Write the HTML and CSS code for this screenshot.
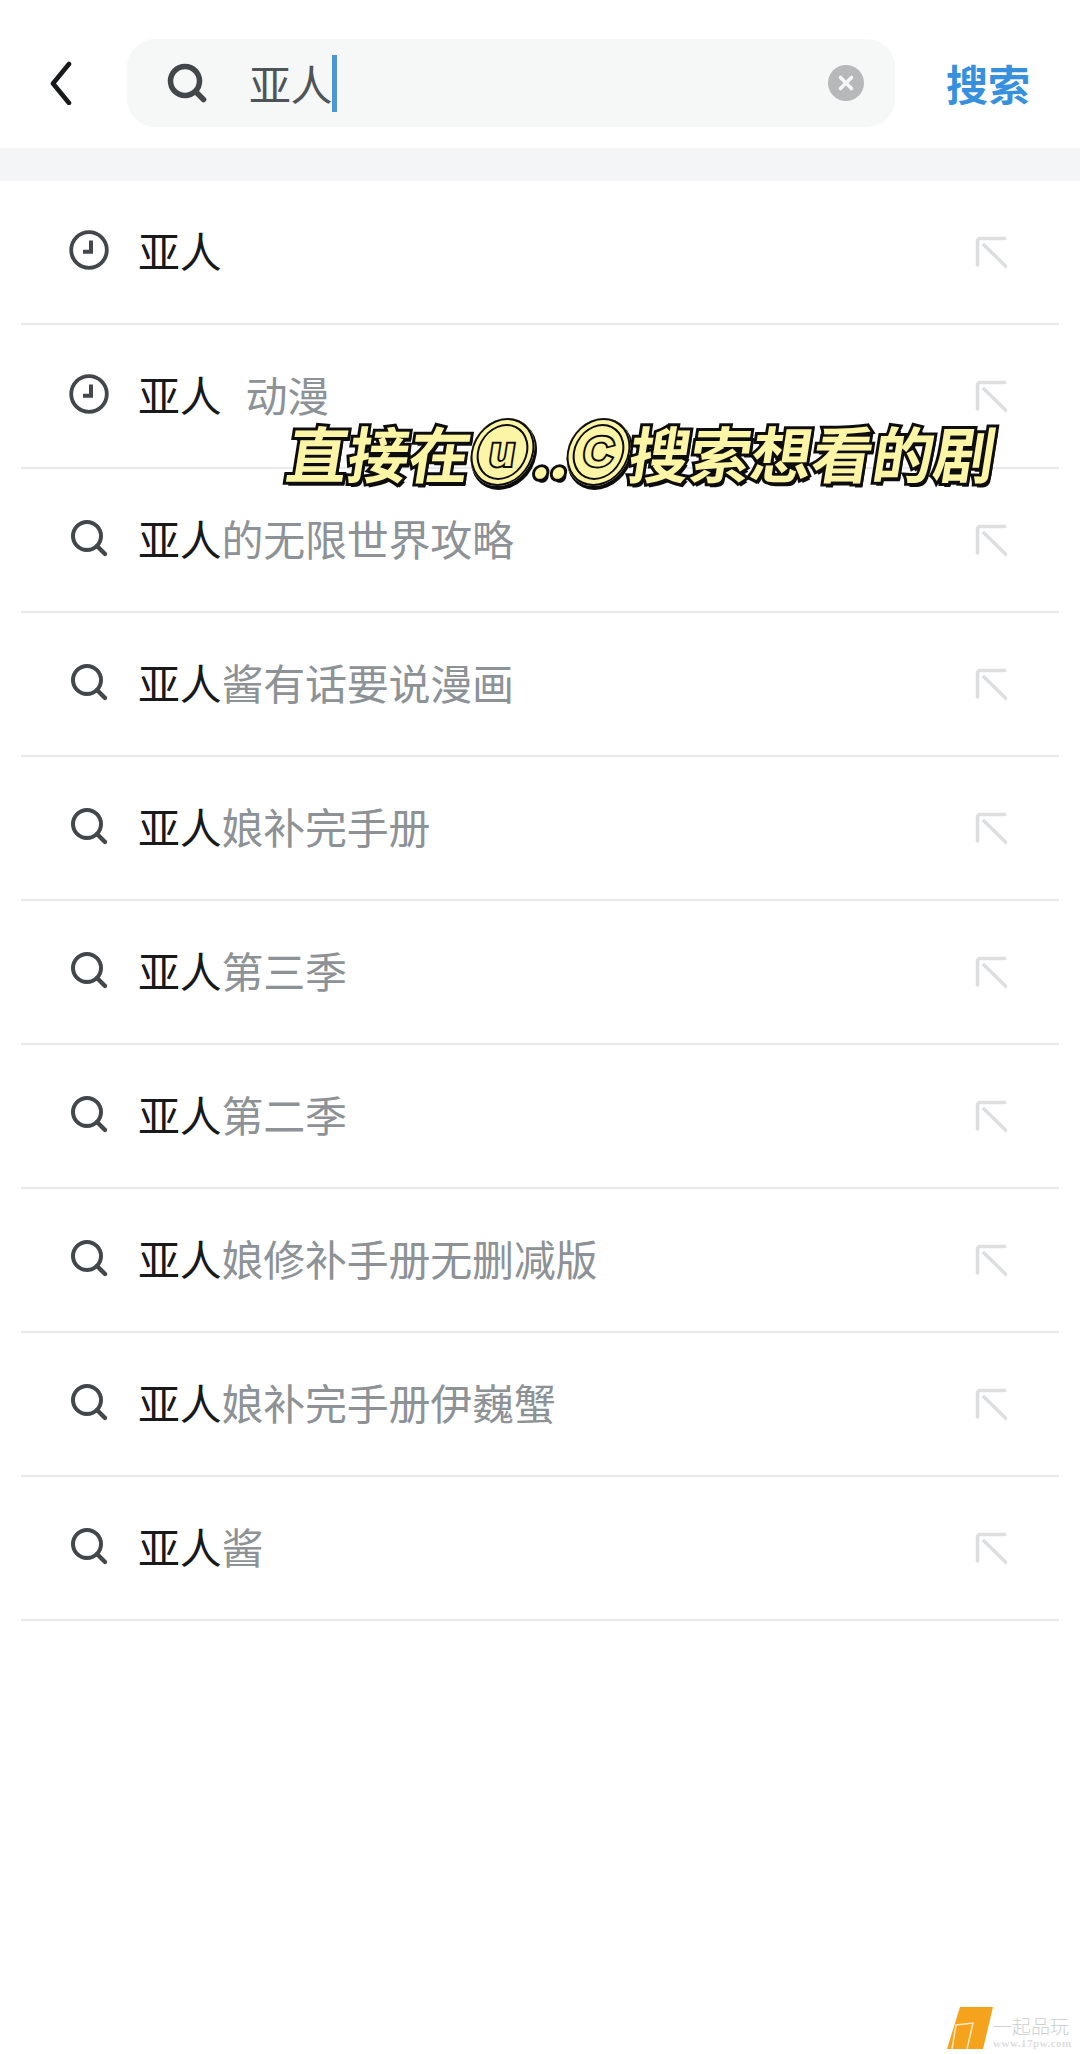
FILE: index.html
```html
<!DOCTYPE html>
<html lang="zh-CN">
<head>
<meta charset="utf-8">
<title>搜索</title>
<link rel="stylesheet" href="styles.css">
</head>
<body>
<svg class="defs" width="0" height="0" aria-hidden="true">
  <symbol id="i-search" viewBox="0 0 40 40"><circle cx="18" cy="18" r="14" fill="none" stroke="currentColor" stroke-width="4"/><path d="M28 28l8 8" fill="none" stroke="currentColor" stroke-width="4.400" stroke-linecap="round"/></symbol>
  <symbol id="i-search-bold" viewBox="0 0 40 40"><circle cx="18" cy="18" r="14.500" fill="none" stroke="currentColor" stroke-width="5.500"/><path d="M29 29l7.500 7.500" fill="none" stroke="currentColor" stroke-width="5.500" stroke-linecap="round"/></symbol>
  <symbol id="i-clock" viewBox="0 0 40 40"><circle cx="20" cy="20" r="17.800" fill="none" stroke="currentColor" stroke-width="3.800"/><path d="M22 10.500v11.200h-8" fill="none" stroke="currentColor" stroke-width="4"/></symbol>
  <symbol id="i-fill" viewBox="0 0 32 32"><path d="M29.500 2.500H5.500Q2.500 2.500 2.500 5.500V29M9 9L31 30.500" fill="none" stroke="currentColor" stroke-width="3.600" stroke-linecap="round"/></symbol>
</svg>
<div class="page">
  <header class="top">
    <svg class="back" viewBox="0 0 22 44"><path d="M19 3L3 22.500L19 42" fill="none" stroke="currentColor" stroke-width="4.600" stroke-linecap="round" stroke-linejoin="round"/></svg>
    <div class="box">
      <svg class="box-search"><use href="#i-search-bold"/></svg>
      <span class="query">亚人</span><i class="caret"></i>
      <svg class="clear" viewBox="0 0 36 36"><circle cx="18" cy="18" r="18" fill="#b7b8b9"/><path d="M12.500 12.500l11 11M23.500 12.500l-11 11" stroke="#f6f6f6" stroke-width="3.600" stroke-linecap="round"/></svg>
    </div>
    <span class="go">搜索</span>
  </header>
  <div class="band"></div>
  <ul class="list">
    <li class="row"><svg class="lead clock"><use href="#i-clock"/></svg><span class="hit">亚人</span><svg class="fill"><use href="#i-fill"/></svg></li>
    <li class="row"><svg class="lead clock"><use href="#i-clock"/></svg><span class="hit">亚人</span><span class="tag">动漫</span><svg class="fill"><use href="#i-fill"/></svg></li>
    <li class="row"><svg class="lead"><use href="#i-search"/></svg><span class="hit">亚人</span><span class="rest">的无限世界攻略</span><svg class="fill"><use href="#i-fill"/></svg></li>
    <li class="row"><svg class="lead"><use href="#i-search"/></svg><span class="hit">亚人</span><span class="rest">酱有话要说漫画</span><svg class="fill"><use href="#i-fill"/></svg></li>
    <li class="row"><svg class="lead"><use href="#i-search"/></svg><span class="hit">亚人</span><span class="rest">娘补完手册</span><svg class="fill"><use href="#i-fill"/></svg></li>
    <li class="row"><svg class="lead"><use href="#i-search"/></svg><span class="hit">亚人</span><span class="rest">第三季</span><svg class="fill"><use href="#i-fill"/></svg></li>
    <li class="row"><svg class="lead"><use href="#i-search"/></svg><span class="hit">亚人</span><span class="rest">第二季</span><svg class="fill"><use href="#i-fill"/></svg></li>
    <li class="row"><svg class="lead"><use href="#i-search"/></svg><span class="hit">亚人</span><span class="rest">娘修补手册无删减版</span><svg class="fill"><use href="#i-fill"/></svg></li>
    <li class="row"><svg class="lead"><use href="#i-search"/></svg><span class="hit">亚人</span><span class="rest">娘补完手册伊巍蟹</span><svg class="fill"><use href="#i-fill"/></svg></li>
    <li class="row"><svg class="lead"><use href="#i-search"/></svg><span class="hit">亚人</span><span class="rest">酱</span><svg class="fill"><use href="#i-fill"/></svg></li>
  </ul>
  <div class="caption">
    <span class="cap-text">直接在</span>
    <span class="ring"><span class="ring-letter">u</span></span>
    <span class="cap-text cap-dots">..</span>
    <span class="ring"><span class="ring-letter">C</span></span>
    <span class="cap-text">搜索想看的剧</span>
  </div>
  <div class="mark">
    <svg class="mark-logo" viewBox="0 0 46 42"><path d="M13 0H46L36 42H0Z" fill="#f5a31c"/><path d="M5 42L9 18L26 16L20 42" fill="none" stroke="#ffe9c4" stroke-width="1.500"/></svg>
    <div class="mark-text"><span class="mark-cn">一起品玩</span><span class="mark-url">www.17pw.com</span></div>
  </div>
</div>
</body>
</html>
```
FILE: styles.css
```css
* { box-sizing: border-box; }
html, body { margin: 0; padding: 0; background: #fff; }
body { font-family: "Noto Sans CJK SC", "Noto Sans", sans-serif; }
.defs { position: absolute; }
.page { position: relative; width: 1080px; height: 2054px; overflow: hidden; background: #fff; }
.top { height: 148px; display: flex; align-items: center; padding: 18px 50px 0 50px; }
.back { width: 22px; height: 44px; color: #17191b; margin-right: 55px; flex: none; }
.box { width: 770px; height: 88px; border-radius: 28px; background: #f6f7f7; display: flex; align-items: center; padding: 0 31px 0 40px; }
.box-search { width: 40px; height: 40px; color: #42474c; flex: none; margin-right: 42px; }
.query { font-size: 42px; line-height: 56px; letter-spacing: -0.4px; color: #4f5458; }
.caret { display: block; width: 5px; height: 57px; background: #4c97d1; }
.clear { width: 36px; height: 36px; margin-left: auto; }
.go { font-size: 42px; line-height: 56px; font-weight: 700; color: #3690dd; margin-left: 51px; white-space: nowrap; }
.band { height: 33px; background: #f4f5f6; }
.list { list-style: none; margin: 0; padding: 0; }
.row { height: 144px; margin: 0 21px; padding: 0 52px 0 48px; border-bottom: 2px solid #e8e9ea; display: flex; align-items: center; font-size: 42px; line-height: 56px; letter-spacing: -0.25px; white-space: nowrap; }
.lead { width: 40px; height: 40px; color: #42474c; flex: none; margin-right: 29px; position: relative; top: -2px; }
.hit { color: #17191b; position: relative; top: -2px; }
.rest { color: #8c9296; position: relative; top: -2px; }
.tag { color: #8c9296; margin-left: 24px; position: relative; top: -2px; }
.fill { width: 32px; height: 32px; color: #dcdedf; margin-left: auto; flex: none; }
.caption { position: absolute; left: 288px; top: 415px; height: 74px; display: flex; align-items: center; white-space: nowrap; transform: skewX(-9deg); }
.cap-text { font-size: 61px; line-height: 74px; font-weight: 700; color: #fdf5a6; -webkit-text-stroke: 6px #0d0d0d; paint-order: stroke fill; text-shadow: 3px 4px 0 #0d0d0d; }
.cap-dots { width: 33px; letter-spacing: -2px; }
.ring { flex: none; width: 63px; height: 68px; border-radius: 50%; background: #fdf5a6; box-shadow: 2px 3px 0 1px #0d0d0d, inset 0 0 0 2px #0d0d0d, inset 0 0 0 6px #fdf5a6, inset 0 0 0 8px #0d0d0d; display: flex; align-items: center; justify-content: center; }
.ring-letter { font-family: "Liberation Sans", sans-serif; font-size: 42px; line-height: 46px; font-weight: 700; color: #fdf5a6; -webkit-text-stroke: 4px #0d0d0d; paint-order: stroke fill; }
.mark { position: absolute; left: 947px; top: 2006px; display: flex; align-items: center; gap: 0; }
.mark-logo { width: 46px; height: 42px; flex: none; }
.mark-text { display: flex; flex-direction: column; margin-top: 8px; }
.mark-cn { font-size: 19px; line-height: 23px; color: #ced0d2; font-weight: 300; }
.mark-url { font-family: "Liberation Serif", serif; font-size: 11px; line-height: 13px; font-weight: 700; color: #dcdedf; letter-spacing: 0.5px; }
```
